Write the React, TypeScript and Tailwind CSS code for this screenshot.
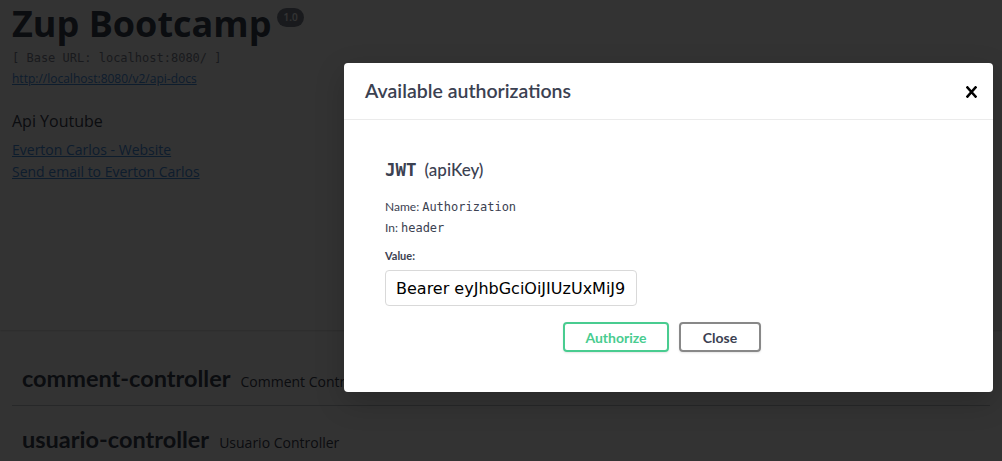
import { useState } from "react";

function TagRow({ name, desc, top }: { name: string; desc: string; top: string }) {
	return (
		<div
			className={`${top} h-[54px] flex items-center pl-[10px] border-b border-[#3b4151]/30`}
		>
			<span className="flex items-baseline text-[#3b4151]">
				<span className="font-['Lato',sans-serif] text-[23.5px] font-bold">{name}</span>
				<span className="font-['Open_Sans',sans-serif] pl-[10px] text-[14px]">{desc}</span>
			</span>
		</div>
	);
}

function AuthModal() {
	const [token] = useState(
		"Bearer eyJhbGciOiJIUzUxMiJ9.eyJzdWIiOiJldmVydG9uIiwiZXhwIjoxNjAwMDAwMDAwfQ"
	);
	return (
		<div className="absolute left-[344px] top-[63px] w-[649px] h-[329px] bg-white rounded-[4px] shadow-[0_10px_30px_0_rgba(0,0,0,0.2)]">
			<div className="h-[57px] flex items-center justify-between pl-[21px] pr-[16px] border-b border-[#ebebeb]">
				<h3 className="font-['Lato',sans-serif] text-[19.5px] font-semibold text-[#3b4151]">
					Available authorizations
				</h3>
				<svg width="11" height="12" viewBox="0 0 11 12" className="mt-[1px]">
					<path
						d="M1.5 1.5 L9.5 10.5 M9.5 1.5 L1.5 10.5"
						stroke="#000"
						strokeWidth="2.6"
						strokeLinecap="square"
					/>
				</svg>
			</div>
			<div className="pl-[41px] text-[#3b4151]">
				<div className="mt-[38px] h-[24px] flex items-center">
					<span className="font-['DejaVu_Sans_Mono',monospace] text-[17.5px] font-bold">JWT</span>
					<span className="font-['Lato',sans-serif] ml-[8px] text-[17px] font-medium">(apiKey)</span>
				</div>
				<div className="mt-[15px] h-[20px] flex items-center text-[12px]">
					<span className="font-['Lato',sans-serif]">Name:</span>
					<span className="font-['DejaVu_Sans_Mono',monospace] ml-[3px]">Authorization</span>
				</div>
				<div className="mt-[1px] h-[20px] flex items-center text-[12px]">
					<span className="font-['Lato',sans-serif]">In:</span>
					<span className="font-['DejaVu_Sans_Mono',monospace] ml-[3px]">header</span>
				</div>
				<div className="font-['Lato',sans-serif] mt-[11px] h-[14px] leading-[14px] text-[11px] font-bold">
					Value:
				</div>
				<input
					readOnly
					value={token}
					className="font-['DejaVu_Sans',sans-serif] mt-[7px] block w-[252px] h-[36px] px-[10px] text-[16px] text-black bg-white border border-[#d9d9d9] rounded-[4px] outline-none"
				/>
			</div>
			<div className="mt-[16px] flex justify-center gap-[10px] pr-[13px] font-['Lato',sans-serif]">
				<button className="w-[106px] h-[30px] border-2 border-[#49cc90] rounded-[4px] text-[14px] font-bold text-[#49cc90] shadow-[0_1px_2px_rgba(0,0,0,0.1)]">
					Authorize
				</button>
				<button className="w-[82px] h-[30px] border-2 border-[#888888] rounded-[4px] text-[14px] font-bold text-[#3b4151] shadow-[0_1px_2px_rgba(0,0,0,0.1)]">
					Close
				</button>
			</div>
		</div>
	);
}

export default function App() {
	return (
		<div className="relative w-full h-[461px] overflow-hidden bg-white font-['Open_Sans',sans-serif]">
			<div className="pl-[12px] pt-[4px]">
				<div className="flex items-start">
					<h2 className="text-[36px] leading-[40px] font-bold text-[#3b4151]">Zup Bootcamp</h2>
					<span className="ml-[6px] mt-[4px] px-[6px] h-[19px] leading-[19px] rounded-full bg-[#7d8492] text-white text-[10px] font-semibold">
						1.0
					</span>
				</div>
				<div className="font-['DejaVu_Sans_Mono',monospace] mt-[6px] h-[16px] leading-[16px] text-[12px] text-[#7d8492]">
					[ Base URL: localhost:8080/ ]
				</div>
				<div className="mt-[5px] h-[16px] leading-[16px] text-[12px]">
					<a className="text-[#4990e2] underline">http://localhost:8080/v2/api-docs</a>
				</div>
				<p className="mt-[22px] h-[24px] leading-[24px] text-[16px] text-[#3b4151]">Api Youtube</p>
				<div className="mt-[6px] flex flex-col items-start text-[14px] leading-[22px]">
					<a className="text-[#4990e2] underline">Everton Carlos - Website</a>
					<a className="text-[#4990e2] underline">Send email to Everton Carlos</a>
				</div>
			</div>
			<div className="mt-[53px] h-[94px] bg-white shadow-[0_1px_2px_0_rgba(0,0,0,0.15)]"></div>
			<div className="px-[12px]">
				<TagRow top="mt-[22px]" name="comment-controller" desc="Comment Controller" />
				<TagRow top="mt-[7px]" name="usuario-controller" desc="Usuario Controller" />
			</div>
			<div className="absolute inset-0 bg-black/80"></div>
			<AuthModal />
		</div>
	);
}
